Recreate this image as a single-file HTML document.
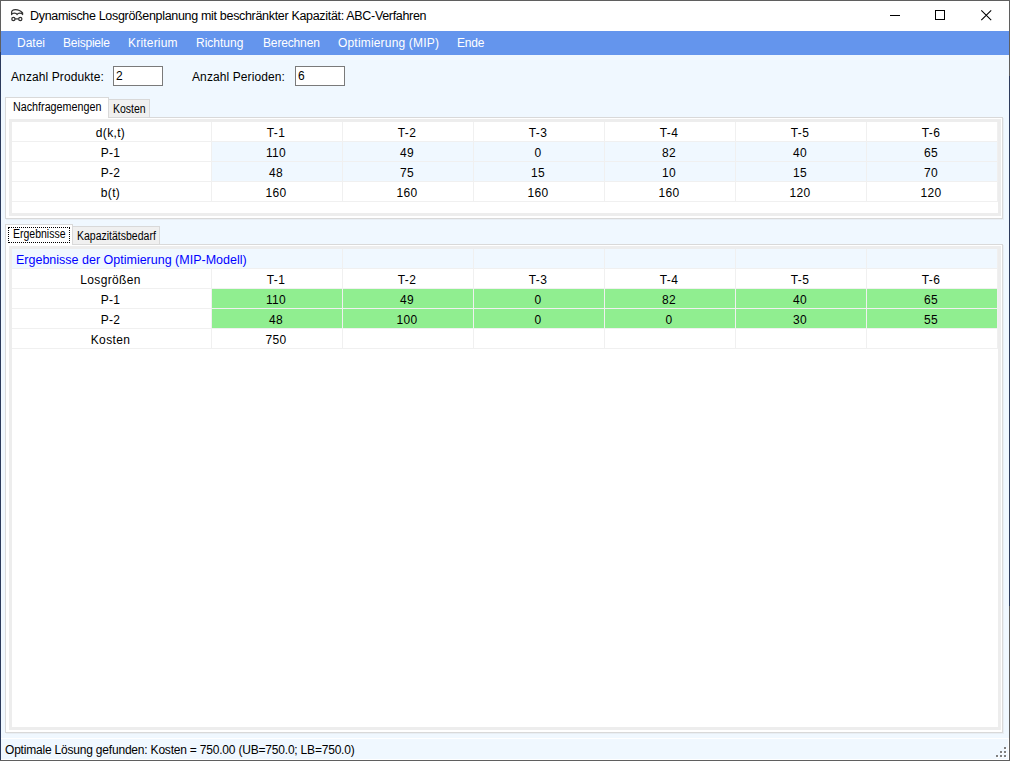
<!DOCTYPE html>
<html><head><meta charset="utf-8"><style>
*{box-sizing:border-box}
html,body{margin:0;padding:0}
body{width:1010px;height:761px;overflow:hidden;position:relative;background:#f0f8ff;font-family:"Liberation Sans",sans-serif;color:#000}
.a{position:absolute}
.c{position:absolute}
.t{font-size:12px;letter-spacing:0.35px;line-height:19px;text-align:center;padding-top:2px;padding-right:2px;white-space:nowrap}
.hd{position:absolute;font-size:12.5px;line-height:19px;color:#0000ff;white-space:nowrap;padding-top:2px}
.menu{position:absolute;top:31px;font-size:12px;line-height:24px;color:#fff;white-space:nowrap}
.lbl{position:absolute;font-size:12px;letter-spacing:0.1px;white-space:nowrap;line-height:14px}
.tb{position:absolute;background:#fff;border:1px solid #7a7a7a;width:50px;height:20px;font-size:12px;line-height:14px;padding:2px 0 0 2px}
.tab{position:absolute;font-size:12px;white-space:nowrap;line-height:14px;transform:scaleX(0.875);transform-origin:0 0}
</style></head><body>
<!-- window border -->
<div class="a" style="left:0;top:0;width:1010px;height:761px;border:1px solid #5f5f5f"></div>
<div class="a" style="left:0;top:52px;width:1px;height:708px;background:#2b3a5c"></div>
<div class="a" style="left:1009px;top:76px;width:1px;height:530px;background:#2e3c5c"></div>
<!-- title bar -->
<div class="a" style="left:1px;top:1px;width:1008px;height:30px;background:#fff"></div>
<svg class="a" style="left:10px;top:8px" width="15" height="15" viewBox="0 0 15 15">
  <path d="M1.6 6.6 L1.6 4.6 C1.6 2.4 3 1.6 5.5 1.6 C8.5 1.6 10.6 2.6 12.6 5 L12.6 6.6 A2.8 1.9 0 0 0 7.1 6.6 A2.8 1.9 0 0 0 1.6 6.6 Z" fill="none" stroke="#333" stroke-width="1.25" stroke-linejoin="round"/>
  <circle cx="3.4" cy="10.9" r="1.6" fill="none" stroke="#333" stroke-width="1.25"/>
  <circle cx="10.3" cy="10.9" r="1.6" fill="none" stroke="#333" stroke-width="1.25"/>
  <line x1="5" y1="10.9" x2="8.7" y2="10.9" stroke="#333" stroke-width="1.25"/>
</svg>
<div class="a" style="left:30px;top:9px;font-size:12.5px;letter-spacing:-0.32px;line-height:14px;white-space:nowrap;color:#000">Dynamische Losgrößenplanung mit beschränkter Kapazität: ABC-Verfahren</div>
<div class="a" style="left:890px;top:15px;width:10px;height:1px;background:#000"></div>
<div class="a" style="left:935px;top:10px;width:10px;height:10px;border:1px solid #000"></div>
<svg class="a" style="left:980px;top:9px" width="13" height="13" viewBox="0 0 13 13"><path d="M1.3 1.3 L11.2 11.2 M11.2 1.3 L1.3 11.2" stroke="#000" stroke-width="1.05"/></svg>
<!-- menu -->
<div class="a" style="left:1px;top:31px;width:1008px;height:24px;background:#6495ed"></div>
<div class="menu" style="left:17px">Datei</div>
<div class="menu" style="left:63px;letter-spacing:-0.22px">Beispiele</div>
<div class="menu" style="left:128px;letter-spacing:0.2px">Kriterium</div>
<div class="menu" style="left:196px">Richtung</div>
<div class="menu" style="left:263px;letter-spacing:-0.15px">Berechnen</div>
<div class="menu" style="left:338px;letter-spacing:0.18px">Optimierung (MIP)</div>
<div class="menu" style="left:457px;letter-spacing:-0.2px">Ende</div>
<!-- inputs -->
<div class="lbl" style="left:11px;top:70px">Anzahl Produkte:</div>
<div class="tb" style="left:113px;top:66px">2</div>
<div class="lbl" style="left:192px;top:70px">Anzahl Perioden:</div>
<div class="tb" style="left:295px;top:66px">6</div>
<!-- tab control 1 -->
<div class="a" style="left:5px;top:117px;width:998px;height:102px;border:1px solid #d9d9d9;background:#fff"></div>
<div class="a" style="left:1003px;top:118px;width:1px;height:102px;background:#e8eef4"></div>
<div class="a" style="left:6px;top:219px;width:998px;height:1px;background:#e8eef4"></div>
<div class="a" style="left:108px;top:99px;width:42px;height:19px;border:1px solid #d9d9d9;background:#f0f0f0"></div>
<div class="a" style="left:5px;top:97px;width:104px;height:21px;border:1px solid #d9d9d9;border-bottom:none;background:#fff"></div>
<div class="tab" style="left:13px;top:100px;transform:scaleX(0.895)">Nachfragemengen</div>
<div class="tab" style="left:113px;top:102px">Kosten</div>
<div class="a" style="left:9px;top:119px;width:992px;height:97px;border:3px solid #ededed;background:#fff"></div>
<div class="c" style="left:12px;top:122px;width:986px;height:80px;background:#f0f0f0"></div>
<div class="c t" style="left:12px;top:122px;width:199px;height:19px;background:#fff">d(k,t)</div>
<div class="c t" style="left:212px;top:122px;width:130px;height:19px;background:#fff">T-1</div>
<div class="c t" style="left:343px;top:122px;width:130px;height:19px;background:#fff">T-2</div>
<div class="c t" style="left:474px;top:122px;width:130px;height:19px;background:#fff">T-3</div>
<div class="c t" style="left:605px;top:122px;width:130px;height:19px;background:#fff">T-4</div>
<div class="c t" style="left:736px;top:122px;width:130px;height:19px;background:#fff">T-5</div>
<div class="c t" style="left:867px;top:122px;width:130px;height:19px;background:#fff">T-6</div>
<div class="c t" style="left:12px;top:142px;width:199px;height:19px;background:#fff">P-1</div>
<div class="c t" style="left:212px;top:142px;width:130px;height:19px;background:#f0f8ff">110</div>
<div class="c t" style="left:343px;top:142px;width:130px;height:19px;background:#f0f8ff">49</div>
<div class="c t" style="left:474px;top:142px;width:130px;height:19px;background:#f0f8ff">0</div>
<div class="c t" style="left:605px;top:142px;width:130px;height:19px;background:#f0f8ff">82</div>
<div class="c t" style="left:736px;top:142px;width:130px;height:19px;background:#f0f8ff">40</div>
<div class="c t" style="left:867px;top:142px;width:130px;height:19px;background:#f0f8ff">65</div>
<div class="c t" style="left:12px;top:162px;width:199px;height:19px;background:#fff">P-2</div>
<div class="c t" style="left:212px;top:162px;width:130px;height:19px;background:#f0f8ff">48</div>
<div class="c t" style="left:343px;top:162px;width:130px;height:19px;background:#f0f8ff">75</div>
<div class="c t" style="left:474px;top:162px;width:130px;height:19px;background:#f0f8ff">15</div>
<div class="c t" style="left:605px;top:162px;width:130px;height:19px;background:#f0f8ff">10</div>
<div class="c t" style="left:736px;top:162px;width:130px;height:19px;background:#f0f8ff">15</div>
<div class="c t" style="left:867px;top:162px;width:130px;height:19px;background:#f0f8ff">70</div>
<div class="c t" style="left:12px;top:182px;width:199px;height:19px;background:#fff">b(t)</div>
<div class="c t" style="left:212px;top:182px;width:130px;height:19px;background:#fff">160</div>
<div class="c t" style="left:343px;top:182px;width:130px;height:19px;background:#fff">160</div>
<div class="c t" style="left:474px;top:182px;width:130px;height:19px;background:#fff">160</div>
<div class="c t" style="left:605px;top:182px;width:130px;height:19px;background:#fff">160</div>
<div class="c t" style="left:736px;top:182px;width:130px;height:19px;background:#fff">120</div>
<div class="c t" style="left:867px;top:182px;width:130px;height:19px;background:#fff">120</div>
<!-- tab control 2 -->
<div class="a" style="left:5px;top:244px;width:998px;height:489px;border:1px solid #d9d9d9;background:#fff"></div>
<div class="a" style="left:1003px;top:245px;width:1px;height:489px;background:#e8eef4"></div>
<div class="a" style="left:6px;top:733px;width:998px;height:1px;background:#e8eef4"></div>
<div class="a" style="left:72px;top:226px;width:88px;height:19px;border:1px solid #d9d9d9;background:#f0f0f0"></div>
<div class="a" style="left:5px;top:224px;width:68px;height:21px;border:1px solid #d9d9d9;border-bottom:none;background:#fff"></div>
<div class="a" style="left:8px;top:227px;width:62px;height:16px;border:1px dotted #000"></div>
<div class="tab" style="left:13px;top:227px">Ergebnisse</div>
<div class="tab" style="left:77px;top:229px">Kapazitätsbedarf</div>
<div class="a" style="left:9px;top:246px;width:992px;height:484px;border:3px solid #ededed;background:#fff"></div>
<div class="c" style="left:12px;top:249px;width:986px;height:100px;background:#f0f0f0"></div>
<div class="c" style="left:12px;top:249px;width:330px;height:19px;background:#f0f8ff"></div>
<div class="hd" style="left:16px;top:249px">Ergebnisse der Optimierung (MIP-Modell)</div>
<div class="c" style="left:343px;top:249px;width:130px;height:19px;background:#f0f8ff"></div>
<div class="c" style="left:474px;top:249px;width:130px;height:19px;background:#f0f8ff"></div>
<div class="c" style="left:605px;top:249px;width:130px;height:19px;background:#f0f8ff"></div>
<div class="c" style="left:736px;top:249px;width:130px;height:19px;background:#f0f8ff"></div>
<div class="c" style="left:867px;top:249px;width:130px;height:19px;background:#f0f8ff"></div>
<div class="c t" style="left:12px;top:269px;width:199px;height:19px;background:#fff">Losgrößen</div>
<div class="c t" style="left:212px;top:269px;width:130px;height:19px;background:#fff">T-1</div>
<div class="c t" style="left:343px;top:269px;width:130px;height:19px;background:#fff">T-2</div>
<div class="c t" style="left:474px;top:269px;width:130px;height:19px;background:#fff">T-3</div>
<div class="c t" style="left:605px;top:269px;width:130px;height:19px;background:#fff">T-4</div>
<div class="c t" style="left:736px;top:269px;width:130px;height:19px;background:#fff">T-5</div>
<div class="c t" style="left:867px;top:269px;width:130px;height:19px;background:#fff">T-6</div>
<div class="c t" style="left:12px;top:289px;width:199px;height:19px;background:#fff">P-1</div>
<div class="c t" style="left:212px;top:289px;width:130px;height:19px;background:#90ee90">110</div>
<div class="c t" style="left:343px;top:289px;width:130px;height:19px;background:#90ee90">49</div>
<div class="c t" style="left:474px;top:289px;width:130px;height:19px;background:#90ee90">0</div>
<div class="c t" style="left:605px;top:289px;width:130px;height:19px;background:#90ee90">82</div>
<div class="c t" style="left:736px;top:289px;width:130px;height:19px;background:#90ee90">40</div>
<div class="c t" style="left:867px;top:289px;width:130px;height:19px;background:#90ee90">65</div>
<div class="c t" style="left:12px;top:309px;width:199px;height:19px;background:#fff">P-2</div>
<div class="c t" style="left:212px;top:309px;width:130px;height:19px;background:#90ee90">48</div>
<div class="c t" style="left:343px;top:309px;width:130px;height:19px;background:#90ee90">100</div>
<div class="c t" style="left:474px;top:309px;width:130px;height:19px;background:#90ee90">0</div>
<div class="c t" style="left:605px;top:309px;width:130px;height:19px;background:#90ee90">0</div>
<div class="c t" style="left:736px;top:309px;width:130px;height:19px;background:#90ee90">30</div>
<div class="c t" style="left:867px;top:309px;width:130px;height:19px;background:#90ee90">55</div>
<div class="c t" style="left:12px;top:329px;width:199px;height:19px;background:#fff">Kosten</div>
<div class="c t" style="left:212px;top:329px;width:130px;height:19px;background:#fff">750</div>
<div class="c t" style="left:343px;top:329px;width:130px;height:19px;background:#fff"></div>
<div class="c t" style="left:474px;top:329px;width:130px;height:19px;background:#fff"></div>
<div class="c t" style="left:605px;top:329px;width:130px;height:19px;background:#fff"></div>
<div class="c t" style="left:736px;top:329px;width:130px;height:19px;background:#fff"></div>
<div class="c t" style="left:867px;top:329px;width:130px;height:19px;background:#fff"></div>
<!-- status bar -->
<div class="a" style="left:1px;top:738px;width:1008px;height:1px;background:#fff"></div>
<div class="a" style="left:5px;top:743px;font-size:12px;letter-spacing:-0.2px;line-height:14px;white-space:nowrap">Optimale Lösung gefunden: Kosten = 750.00 (UB=750.0; LB=750.0)</div>
<div class="a" style="left:1px;top:759px;width:1008px;height:1px;background:#fff"></div>
<div class="a" style="left:1008px;top:738px;width:1px;height:22px;background:#fff"></div>
<!-- grip -->
<div class="a" style="left:1005px;top:748px;width:2px;height:2px;background:#fff"></div>
<div class="a" style="left:1001px;top:752px;width:2px;height:2px;background:#fff"></div>
<div class="a" style="left:1005px;top:752px;width:2px;height:2px;background:#fff"></div>
<div class="a" style="left:997px;top:756px;width:2px;height:2px;background:#fff"></div>
<div class="a" style="left:1001px;top:756px;width:2px;height:2px;background:#fff"></div>
<div class="a" style="left:1005px;top:756px;width:2px;height:2px;background:#fff"></div>
<div class="a" style="left:1004px;top:747px;width:2px;height:2px;background:#808080"></div>
<div class="a" style="left:1000px;top:751px;width:2px;height:2px;background:#808080"></div>
<div class="a" style="left:1004px;top:751px;width:2px;height:2px;background:#808080"></div>
<div class="a" style="left:996px;top:755px;width:2px;height:2px;background:#808080"></div>
<div class="a" style="left:1000px;top:755px;width:2px;height:2px;background:#808080"></div>
<div class="a" style="left:1004px;top:755px;width:2px;height:2px;background:#808080"></div>
</body></html>
